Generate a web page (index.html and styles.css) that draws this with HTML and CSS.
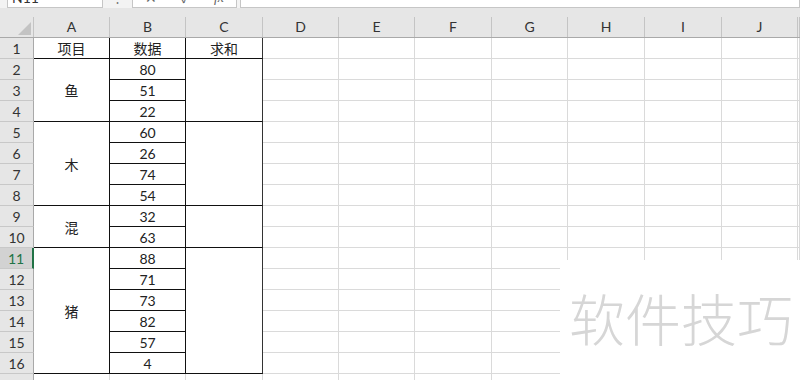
FILE: index.html
```html
<!DOCTYPE html>
<html lang="zh-CN">
<head>
<meta charset="utf-8">
<title>Sheet</title>
<link rel="stylesheet" href="styles.css">
</head>
<body>
<div class="app">
  <div class="fbar">
    <div class="namebox">N11</div>
    <div class="sep">⋮</div>
    <div class="fbtns"><span>✕</span><span>✓</span><span class="fx">fx</span></div>
    <div class="finput"></div>
  </div>
  <div class="colhead">
    <div class="corner"><span class="tri"></span></div>
    <div class="ch w76">A</div>
    <div class="ch w76">B</div>
    <div class="ch w77">C</div>
    <div class="ch w76">D</div>
    <div class="ch w76">E</div>
    <div class="ch w77">F</div>
    <div class="ch w76">G</div>
    <div class="ch w77">H</div>
    <div class="ch w77">I</div>
    <div class="ch w76">J</div>
    <div class="ch rest"></div>
  </div>
  <div class="sheet">
    <div class="rowhead">
      <div class="rh">1</div>
      <div class="rh">2</div>
      <div class="rh">3</div>
      <div class="rh">4</div>
      <div class="rh">5</div>
      <div class="rh">6</div>
      <div class="rh">7</div>
      <div class="rh">8</div>
      <div class="rh">9</div>
      <div class="rh">10</div>
      <div class="rh sel">11</div>
      <div class="rh">12</div>
      <div class="rh">13</div>
      <div class="rh">14</div>
      <div class="rh">15</div>
      <div class="rh">16</div>
      <div class="rh">17</div>
    </div>
    <div class="col w76">
      <div class="c">项目</div>
      <div class="c h3">鱼</div>
      <div class="c h4">木</div>
      <div class="c h2">混</div>
      <div class="c h6">猪</div>
      <div class="blank"></div>
    </div>
    <div class="col w76">
      <div class="c">数据</div>
      <div class="c">80</div>
      <div class="c">51</div>
      <div class="c">22</div>
      <div class="c">60</div>
      <div class="c">26</div>
      <div class="c">74</div>
      <div class="c">54</div>
      <div class="c">32</div>
      <div class="c">63</div>
      <div class="c">88</div>
      <div class="c">71</div>
      <div class="c">73</div>
      <div class="c">82</div>
      <div class="c">57</div>
      <div class="c">4</div>
      <div class="blank"></div>
    </div>
    <div class="col w77 last">
      <div class="c">求和</div>
      <div class="c h3"></div>
      <div class="c h4"></div>
      <div class="c h2"></div>
      <div class="c h6"></div>
      <div class="blank"></div>
    </div>
    <div class="col e w76"></div>
    <div class="col e w76"></div>
    <div class="col e w77"></div>
    <div class="col e w76"></div>
    <div class="col e w77"></div>
    <div class="col e w77"></div>
    <div class="col e w76"></div>
    <div class="col e rest"></div>
  </div>
  <div class="watermark">软件技巧</div>
</div>
</body>
</html>
```

FILE: styles.css
```css
* { box-sizing: border-box; margin: 0; padding: 0; }
html, body { width: 800px; height: 380px; overflow: hidden; background: #fff; }
body {
  font-family: Lato, "Noto Sans CJK SC", sans-serif;
  font-size: 14px;
  color: #222;
}
.app { position: relative; width: 800px; height: 380px; overflow: hidden; }

/* formula bar (mostly scrolled off the top) */
.fbar {
  height: 8px;
  display: flex;
  background: #f3f3f3;
  overflow: hidden;
}
.namebox {
  width: 96px;
  margin-left: 7px;
  height: 26px;
  margin-top: -18px;
  background: #fff;
  border: 1px solid #c6c6c6;
  line-height: 30px;
  padding-left: 4px;
  color: #333;
}
.sep {
  width: 29px;
  margin-top: -18px;
  text-align: center;
  line-height: 30px;
  color: #777;
  font-size: 13px;
}
.fbtns {
  width: 105px;
  height: 26px;
  margin-top: -18px;
  background: #fff;
  border: 1px solid #c6c6c6;
  display: flex;
  justify-content: space-around;
  line-height: 30px;
  color: #666;
}
.fbtns .fx { font-style: italic; font-family: "Liberation Serif", serif; }
.finput {
  flex: 1;
  margin-left: 3px;
  height: 26px;
  margin-top: -18px;
  background: #fff;
  border: 1px solid #c6c6c6;
}

/* column headers */
.colhead {
  display: flex;
  height: 30px;
  padding-top: 9px;
  background: #e6e6e6;
  border-bottom: 1px solid #a9a9a9;
}
.corner {
  width: 34px;
  flex: none;
  position: relative;
  border-right: 1px solid #c4c4c4;
  display: flex;
  align-items: flex-end;
  justify-content: flex-end;
  padding: 0 2px 2px 0;
}
.tri {
  width: 0;
  height: 0;
  border-left: 13px solid transparent;
  border-bottom: 13px solid #c3c3c3;
}
.ch {
  flex: none;
  border-right: 1px solid #c4c4c4;
  text-align: center;
  line-height: 20px;
  color: #333;
}
.w76 { width: 76px; }
.w77 { width: 77px; }
.rest { flex: 1; }

/* sheet body */
.sheet {
  display: flex;
  height: 357px;
  background: repeating-linear-gradient(to bottom, transparent 0, transparent 20px, #dadada 20px, #dadada 21px);
}
.rowhead {
  width: 34px;
  flex: none;
  background: #e6e6e6;
}
.rh {
  height: 21px;
  border-bottom: 1px solid #c8c8c8;
  border-right: 1px solid #a9a9a9;
  display: flex;
  align-items: center;
  justify-content: center;
  color: #333;
}
.rh.sel {
  background: #d2d2d2;
  color: #217346;
  border-right: 2px solid #217346;
}
.col {
  flex: none;
  display: flex;
  flex-direction: column;
}
.col.rest { flex: 1; }
.c {
  height: 21px;
  flex: none;
  background: #fff;
  border-right: 1px solid #111;
  border-bottom: 1px solid #111;
  display: flex;
  align-items: center;
  justify-content: center;
  color: #222;
}
.c.h2 { height: 42px; }
.c.h3 { height: 63px; }
.c.h4 { height: 84px; }
.c.h6 { height: 126px; }
.last .c { border-right-color: #333; }
.blank {
  height: 21px;
  border-right: 1px solid #dadada;
}
.col.e {
  border-right: 1px solid #dadada;
}

/* watermark overlay */
.watermark {
  position: absolute;
  left: 560px;
  top: 260px;
  width: 240px;
  height: 120px;
  background: #fff;
  color: #d6d6d6;
  font-family: "Noto Sans CJK SC", sans-serif;
  font-weight: 300;
  font-size: 56px;
  line-height: 56px;
  padding: 29px 0 0 9px;
  white-space: nowrap;
}
```
